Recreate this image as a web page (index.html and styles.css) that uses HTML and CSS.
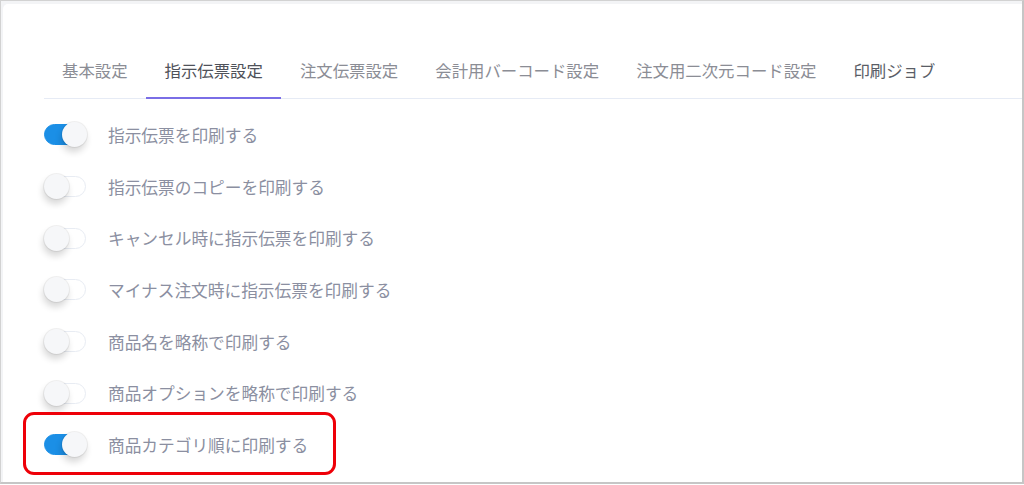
FILE: index.html
```html
<!DOCTYPE html>
<html lang="ja">
<head>
<meta charset="utf-8">
<link rel="stylesheet" href="styles.css">
</head>
<body>
<div class="frame">
  <div class="card">
    <nav class="tabs">
      <div class="tab">基本設定</div>
      <div class="tab active">指示伝票設定</div>
      <div class="tab">注文伝票設定</div>
      <div class="tab">会計用バーコード設定</div>
      <div class="tab">注文用二次元コード設定</div>
      <div class="tab dark">印刷ジョブ</div>
    </nav>
    <ul class="settings">
      <li class="row"><span class="toggle on"><span class="knob"></span></span><span class="label">指示伝票を印刷する</span></li>
      <li class="row"><span class="toggle"><span class="knob"></span></span><span class="label">指示伝票のコピーを印刷する</span></li>
      <li class="row"><span class="toggle"><span class="knob"></span></span><span class="label">キャンセル時に指示伝票を印刷する</span></li>
      <li class="row"><span class="toggle"><span class="knob"></span></span><span class="label">マイナス注文時に指示伝票を印刷する</span></li>
      <li class="row"><span class="toggle"><span class="knob"></span></span><span class="label">商品名を略称で印刷する</span></li>
      <li class="row"><span class="toggle"><span class="knob"></span></span><span class="label">商品オプションを略称で印刷する</span></li>
      <li class="row"><span class="toggle on"><span class="knob"></span></span><span class="label">商品カテゴリ順に印刷する</span></li>
    </ul>
    <div class="highlight"></div>
  </div>
</div>
</body>
</html>
```
FILE: styles.css
```css
html, body {
  margin: 0;
  padding: 0;
  background: #ffffff;
}
body {
  font-family: "Noto Sans CJK JP", "Noto Sans", sans-serif;
}
.frame {
  width: 1021px;
  height: 481px;
  border: 1px solid #d2d2d2;
  border-right: 2px solid #c6c6c6;
  border-bottom: 2px solid #c6c6c6;
  background: #f3f4f6;
  position: relative;
  overflow: hidden;
}
.card {
  margin: 3px 0 0 2px;
  height: 478px;
  background: #ffffff;
  border-radius: 5px 0 0 0;
  padding: 38px 0 0 41px;
  box-sizing: border-box;
}
.tabs {
  display: flex;
  border-bottom: 1px solid #e6ebf5;
  height: 56px;
}
.tab {
  padding: 0 18.5px;
  height: 57px;
  line-height: 56px;
  font-size: 16.4px;
  color: #8b8d95;
  box-sizing: border-box;
  white-space: nowrap;
  margin-bottom: -1px;
}
.tab:first-child {
  padding-left: 18px;
}
.tab.active {
  color: #4f525a;
  border-bottom: 2px solid #7a6ee6;
}
.tab.dark {
  color: #5a5d66;
}
.settings {
  list-style: none;
  margin: 0;
  padding: 10px 0 0 0;
}
.row {
  display: flex;
  align-items: center;
  height: 51.7px;
  gap: 22px;
}
.toggle {
  position: relative;
  width: 42px;
  height: 21px;
  border-radius: 11px;
  background: #ffffff;
  border: 1px solid #e8ecf3;
  box-sizing: border-box;
  flex: none;
}
.toggle.on {
  background: #1b8fe6;
  border-color: #1b8fe6;
}
.knob {
  position: absolute;
  top: -3px;
  left: -1px;
  width: 25px;
  height: 25px;
  border-radius: 50%;
  background: #f6f7f9;
  box-shadow: 0 0 0 1px rgba(0,0,0,0.06), -1px 5px 7px rgba(0,0,0,0.16);
}
.toggle.on .knob {
  left: auto;
  right: -2px;
}
.label {
  font-size: 16.7px;
  color: #8b8fa1;
  white-space: nowrap;
}
.highlight {
  position: absolute;
  left: 22px;
  top: 411px;
  width: 313px;
  height: 63px;
  border: 3.5px solid #ee0008;
  border-radius: 11px;
  box-sizing: border-box;
}
```
